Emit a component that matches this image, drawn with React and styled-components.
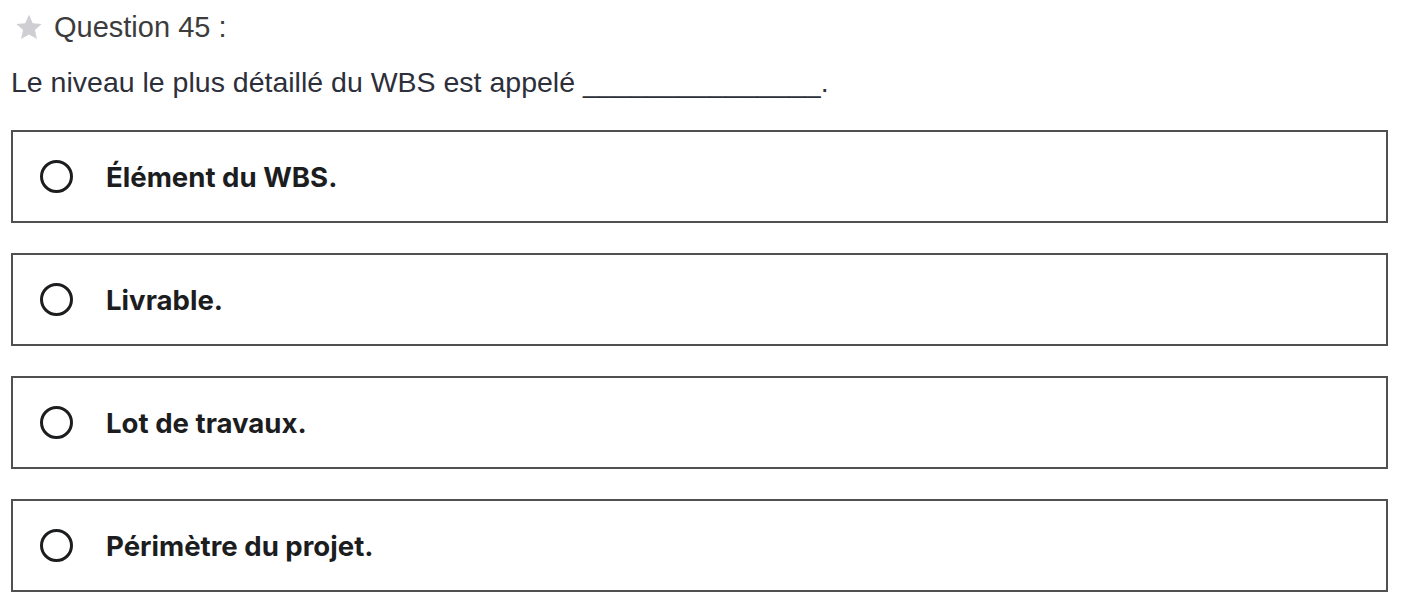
import React from 'react'
import styled, { createGlobalStyle } from 'styled-components';

const GlobalStyle = createGlobalStyle`
  body {
    margin: 0;
    background: #ffffff;
  }
`;

const Page = styled.div`
  display: flex;
  flex-direction: column;
  padding: 11px 24px 0 11px;
  font-family: "Liberation Sans", Arial, sans-serif;
`;

const Header = styled.div`
  display: flex;
  align-items: center;
  gap: 10px;
  padding-left: 3px;
  height: 32px;
  color: #3c3c3c;
  font-size: 29px;
`;

const Prompt = styled.div`
  margin-top: 22px;
  font-size: 28.5px;
  color: #2d2f3a;
  line-height: 34px;
`;

const Options = styled.div`
  display: flex;
  flex-direction: column;
  gap: 30px;
  margin-top: 31px;
`;

const Option = styled.label`
  display: flex;
  align-items: center;
  gap: 33px;
  height: 89px;
  padding-left: 27px;
  border: 2px solid #505050;
  cursor: pointer;
`;

const Radio = styled.span`
  width: 33px;
  height: 33px;
  border: 3px solid #1c1d1f;
  border-radius: 50%;
  box-sizing: border-box;
  flex-shrink: 0;
`;

const OptionText = styled.span`
  font-family: Inter, "Noto Sans", sans-serif;
  font-weight: 700;
  font-size: 27.6px;
  color: #1c1d1f;
`;

const Star = () => (
  <svg width="30" height="29" viewBox="0 0 24 24">
    <path
      d="M12 1.5l3.1 6.9 7.4.7-5.6 5 1.7 7.4L12 17.7l-6.6 3.8 1.7-7.4-5.6-5 7.4-.7z"
      fill="#cfcfd3"
    />
  </svg>
);

const answers = [
  'Élément du WBS.',
  'Livrable.',
  'Lot de travaux.',
  'Périmètre du projet.',
];

export default function App() {
  return (
    <Page>
      <GlobalStyle />
      <Header>
        <Star />
        <span>Question 45 :</span>
      </Header>
      <Prompt>Le niveau le plus détaillé du WBS est appelé _______________.</Prompt>
      <Options>
        {answers.map((a) => (
          <Option key={a}>
            <Radio />
            <OptionText>{a}</OptionText>
          </Option>
        ))}
      </Options>
    </Page>
  );
}
